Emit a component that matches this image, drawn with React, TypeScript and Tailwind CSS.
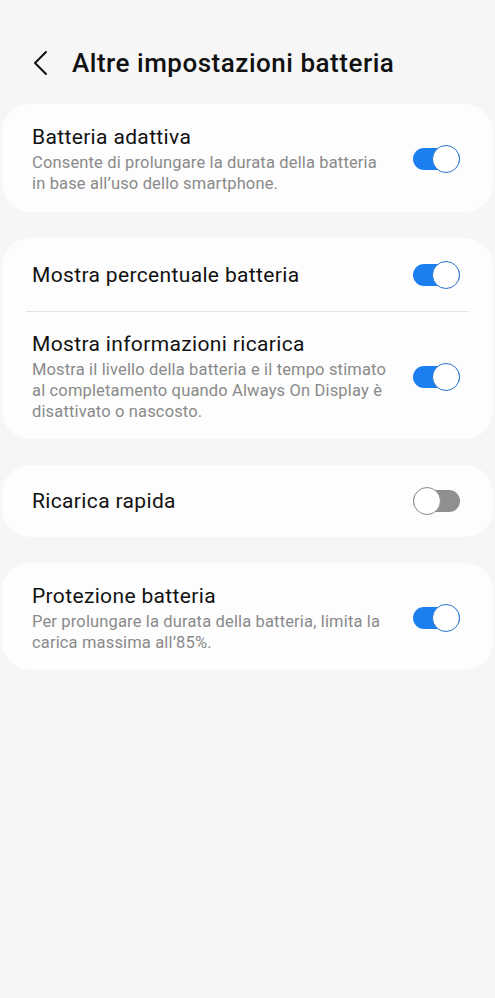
function Toggle({ on }: { on: boolean }) {
    return (
        <div className="relative w-[47px] h-[28px] shrink-0">
            <div className={"absolute left-0 right-0 top-[3px] h-[22px] rounded-full " + (on ? "bg-[#1b7ff0]" : "bg-[#8f8f8f]")}></div>
            <div className={"absolute top-0 w-[28px] h-[28px] rounded-full bg-white border-[1.5px] " + (on ? "right-0 border-[#2b74c9]" : "left-0 border-[#8a8a8a]")}></div>
        </div>
    )
}

function Row({ title, desc, on, className = "" }: { title: string; desc?: string; on: boolean; className?: string }) {
    return (
        <div className={"flex items-center justify-between pl-[30px] pr-[33px] " + className}>
            <div className="pr-[20px]">
                <div className="text-[21px] leading-[26px] tracking-[0.35px] text-[#111]">{title}</div>
                {desc && <div className="mt-[2px] text-[16.5px] leading-[21px] tracking-[0.15px] text-[#8a8a8a]">{desc}</div>}
            </div>
            <Toggle on={on} />
        </div>
    )
}

export default function App() {
    return (
        <div className="min-h-[998px] bg-[#f6f6f6] pt-[48px]" style={{ fontFamily: 'Roboto, "Noto Sans", sans-serif' }}>
            <div className="flex items-center h-[30px] pl-[32px]">
                <svg width="16" height="26" viewBox="0 0 16 26" fill="none">
                    <path d="M14 2 L3 13 L14 24" stroke="#111" strokeWidth="2" strokeLinecap="round" strokeLinejoin="round" />
                </svg>
                <h1 className="ml-[24px] text-[26px] font-medium text-[#111] tracking-[0.52px]">Altre impostazioni batteria</h1>
            </div>

            <div className="mt-[26px] mx-[2px] space-y-[26px]">
                <div className="rounded-[28px] bg-[#fdfdfd] pt-[20px] pb-[18px]">
                    <Row title="Batteria adattiva" desc="Consente di prolungare la durata della batteria in base all’uso dello smartphone." on={true} />
                </div>

                <div className="rounded-[28px] bg-[#fdfdfd] pb-[17px]">
                    <Row title="Mostra percentuale batteria" on={true} className="h-[73px]" />
                    <div className="mx-[24px] h-px bg-[#e4e4e4]"></div>
                    <Row title="Mostra informazioni ricarica" desc="Mostra il livello della batteria e il tempo stimato al completamento quando Always On Display è disattivato o nascosto." on={true} className="pt-[19px]" />
                </div>

                <div className="rounded-[28px] bg-[#fdfdfd]">
                    <Row title="Ricarica rapida" on={false} className="h-[72px]" />
                </div>

                <div className="rounded-[28px] bg-[#fdfdfd] pt-[20px] pb-[17px]">
                    <Row title="Protezione batteria" desc="Per prolungare la durata della batteria, limita la carica massima all’85%." on={true} />
                </div>
            </div>
        </div>
    )
}
